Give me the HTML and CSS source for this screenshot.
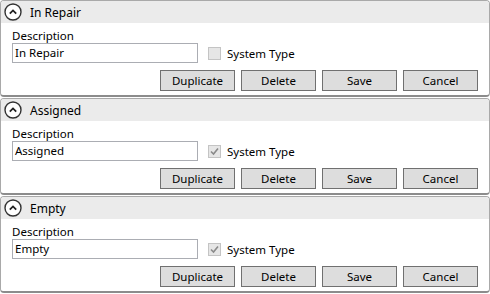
FILE: index.html
```html
<!DOCTYPE html>
<html lang="en">
<head>
    <meta charset="UTF-8">
    <title>Status Types</title>
    <link rel="stylesheet" href="styles.css">
</head>
<body>
    <div class="panel">
        <div class="panel-header">
            <svg class="toggle" width="18" height="18" viewBox="0 0 18 18"><circle cx="9" cy="9" r="8" fill="#fff" stroke="#333" stroke-width="1.4"/><path d="M5.8 10.6 L9 7.4 L12.2 10.6" fill="none" stroke="#222" stroke-width="1.8"/></svg>
            <span class="title">In Repair</span>
        </div>
        <div class="panel-body">
            <div class="label">Description</div>
            <div class="field-row">
                <div class="textbox">In Repair</div>
                <div class="check"><span class="box"></span>System Type</div>
            </div>
            <div class="actions">
                <button>Duplicate</button>
                <button>Delete</button>
                <button>Save</button>
                <button>Cancel</button>
            </div>
        </div>
    </div>

    <div class="panel">
        <div class="panel-header">
            <svg class="toggle" width="18" height="18" viewBox="0 0 18 18"><circle cx="9" cy="9" r="8" fill="#fff" stroke="#333" stroke-width="1.4"/><path d="M5.8 10.6 L9 7.4 L12.2 10.6" fill="none" stroke="#222" stroke-width="1.8"/></svg>
            <span class="title">Assigned</span>
        </div>
        <div class="panel-body">
            <div class="label">Description</div>
            <div class="field-row">
                <div class="textbox">Assigned</div>
                <div class="check"><span class="box checked"><svg width="11" height="11" viewBox="0 0 11 11"><path d="M2 5.5 L4.5 8 L9 2.5" fill="none" stroke="#8a8a8a" stroke-width="1.6"/></svg></span>System Type</div>
            </div>
            <div class="actions">
                <button>Duplicate</button>
                <button>Delete</button>
                <button>Save</button>
                <button>Cancel</button>
            </div>
        </div>
    </div>

    <div class="panel">
        <div class="panel-header">
            <svg class="toggle" width="18" height="18" viewBox="0 0 18 18"><circle cx="9" cy="9" r="8" fill="#fff" stroke="#333" stroke-width="1.4"/><path d="M5.8 10.6 L9 7.4 L12.2 10.6" fill="none" stroke="#222" stroke-width="1.8"/></svg>
            <span class="title">Empty</span>
        </div>
        <div class="panel-body">
            <div class="label">Description</div>
            <div class="field-row">
                <div class="textbox">Empty</div>
                <div class="check"><span class="box checked"><svg width="11" height="11" viewBox="0 0 11 11"><path d="M2 5.5 L4.5 8 L9 2.5" fill="none" stroke="#8a8a8a" stroke-width="1.6"/></svg></span>System Type</div>
            </div>
            <div class="actions">
                <button>Duplicate</button>
                <button>Delete</button>
                <button>Save</button>
                <button>Cancel</button>
            </div>
        </div>
    </div>
</body>
</html>
```

FILE: styles.css
```css
body {
    margin: 0;
    background: #ffffff;
    font-family: "Noto Sans", "Open Sans", sans-serif;
    font-size: 11.5px;
    color: #000;
    width: 490px;
}

.panel {
    box-sizing: border-box;
    height: 97px;
    margin-bottom: 1px;
    border: 1px solid #a9a9a9;
    border-bottom: 2px solid #8c8c8c;
    border-radius: 4px;
    overflow: hidden;
}

.panel-header {
    height: 22px;
    background: #ebebeb;
    display: flex;
    align-items: center;
    padding-left: 3px;
}

.toggle {
    display: block;
}

.title {
    margin-left: 8px;
    font-size: 12px;
}

.panel-body {
    padding: 6px 11px 0 11px;
}

.label {
    height: 14px;
    line-height: 14px;
}

.field-row {
    display: flex;
    align-items: center;
}

.textbox {
    box-sizing: border-box;
    width: 186px;
    height: 20px;
    line-height: 18px;
    border: 1px solid #abadb3;
    padding-left: 2px;
}

.check {
    display: flex;
    align-items: center;
    margin-left: 10px;
}

.box {
    box-sizing: border-box;
    width: 13px;
    height: 13px;
    border: 1px solid #c4c4c4;
    background: #e6e6e6;
    margin-right: 6px;
    display: flex;
    align-items: center;
    justify-content: center;
}

.actions {
    display: flex;
    justify-content: flex-end;
    gap: 6px;
    margin-top: 7px;
}

.actions button {
    box-sizing: border-box;
    width: 75px;
    height: 21px;
    border: 1px solid #707070;
    border-radius: 0;
    background: #dddddd;
    font-family: inherit;
    font-size: 11.5px;
    padding: 0;
    color: #000;
}
```
